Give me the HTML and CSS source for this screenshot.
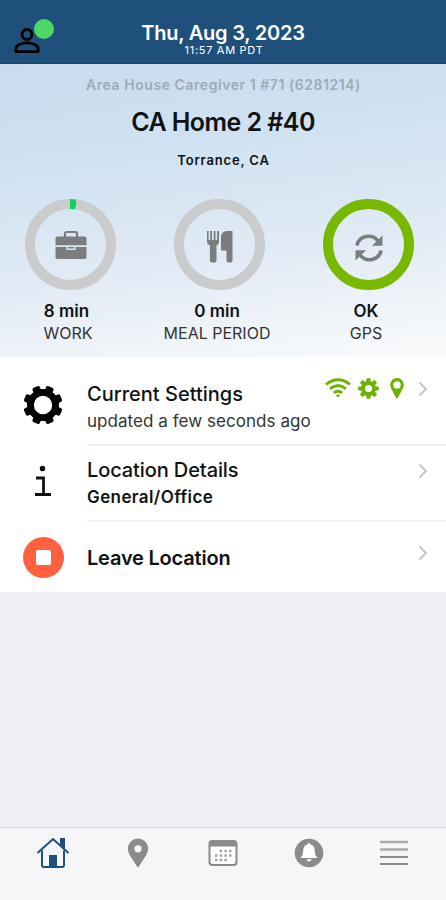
FILE: index.html
```html
<!DOCTYPE html>
<html lang="en">
  <head>
    <meta charset="UTF-8" />
    <meta name="viewport" content="width=device-width, initial-scale=1.0" />
    <title>CA Home 2 #40</title>
    <link rel="stylesheet" href="styles.css">
  </head>
  <body>
    <header class="topbar">
      <div class="profile">
        <svg width="28" height="26" viewBox="0 0 28 26" fill="none" stroke="#000" stroke-width="2.8">
          <circle cx="13" cy="6.5" r="5" />
          <path d="M1.8 23.6v-2.4c0-8.4 22.4-8.4 22.4 0v2.4z" stroke-linejoin="round" />
        </svg>
        <span class="online"></span>
      </div>
      <h1 class="date">Thu, Aug 3, 2023</h1>
      <div class="clock">11:57 AM PDT</div>
    </header>

    <section class="hero">
      <div class="caregiver">Area House Caregiver 1 #71 (6281214)</div>
      <h2 class="home">CA Home 2 #40</h2>
      <div class="city">Torrance, CA</div>

      <div class="stats">
        <div class="stat">
          <div class="ring work">
            <svg width="34" height="30" viewBox="0 0 34 30" fill="#7b7c7d">
              <path d="M11 7V3.5Q11 2 12.500 2h9Q23 2 23 3.500V7" fill="none" stroke="#7b7c7d" stroke-width="2.200" />
              <path d="M3.500 6.500h27q2 0 2 2v6.700h-31V8.500q0-2 2-2z" />
              <path d="M1.500 17h11v3h9v-3h11v10q0 2-2 2h-27q-2 0-2-2z" />
              <path d="M14 17h6v1.500h-6z" />
            </svg>
          </div>
          <div class="value">8 min</div>
          <div class="label">WORK</div>
        </div>
        <div class="stat">
          <div class="ring meal">
            <svg width="28" height="34" viewBox="0 0 28 34" fill="#7b7c7d">
              <path d="M1 1h1.600v9H4.200V1h1.800v9h1.700V1h1.800v9h1.600V1H13v11q0 2-2.500 3.500v15q0 2-3.300 2t-3.300-2v-15Q1 14 1 12z" />
              <path d="M26.500 1v29.500q0 2-3 2t-3-2V20.500H16q-1 0-1-1V7.500Q15 1 21 1z" />
            </svg>
          </div>
          <div class="value">0 min</div>
          <div class="label">MEAL PERIOD</div>
        </div>
        <div class="stat">
          <div class="ring ok">
            <svg width="30" height="30" viewBox="0 0 30 30" fill="#7b7c7d">
              <path d="M2.800 12.500A12 12 0 0 1 24 8M27.200 17.500A12 12 0 0 1 6 22" fill="none" stroke="#7b7c7d" stroke-width="3.600" />
              <path d="M28.500 2.500v10.200H18zM1.500 27.500V17.300H12z" />
            </svg>
          </div>
          <div class="value">OK</div>
          <div class="label">GPS</div>
        </div>
      </div>
    </section>

    <main class="list">
      <div class="row settings">
        <div class="row-icon">
          <svg width="40" height="40" viewBox="-20 -20 40 40">
            <defs>
              <g id="teeth">
                <rect x="-4" y="-19.600" width="8" height="39.200" rx="2" />
                <rect x="-4" y="-19.600" width="8" height="39.200" rx="2" transform="rotate(45)" />
                <rect x="-4" y="-19.600" width="8" height="39.200" rx="2" transform="rotate(90)" />
                <rect x="-4" y="-19.600" width="8" height="39.200" rx="2" transform="rotate(135)" />
              </g>
            </defs>
            <use href="#teeth" transform="rotate(22.5)" />
            <circle r="16" />
            <circle r="9.200" fill="#fff" />
          </svg>
        </div>
        <div class="row-body">
          <div class="text">
            <div class="title">Current Settings</div>
            <div class="sub">updated a few seconds ago</div>
          </div>
          <div class="status">
            <svg width="26" height="20" viewBox="0 0 26 20" fill="none" stroke="#6bb100" stroke-width="2.800">
              <path d="M1 6.500Q13-3 25 6.500M5 10.800Q13 4.300 21 10.800M8.800 14.900Q13 11.500 17.200 14.900" />
              <path d="M10.800 17.400Q13 15.700 15.200 17.400L13 19.600z" fill="#6bb100" stroke="none" />
            </svg>
            <svg width="21" height="21" viewBox="-20 -20 40 40" fill="#6bb100">
              <use href="#teeth" />
              <circle r="14.500" />
              <circle r="6.800" fill="#fff" />
            </svg>
            <svg class="pin" width="14" height="21" viewBox="0 0 14 21" fill="#6bb100">
              <path fill-rule="evenodd" d="M7 0a6.800 6.800 0 0 1 6.800 6.800C13.800 10 10 15.500 7.800 20q-.8 1-1.600 0C4 15.500.2 10 .2 6.800A6.800 6.800 0 0 1 7 0zm0 3.200a3.700 3.700 0 1 0 0 7.400 3.700 3.700 0 0 0 0-7.400z" />
            </svg>
          </div>
          <svg class="chevron" width="10" height="16" viewBox="0 0 10 16"><path d="M1.500 1.500 8 8l-6.500 6.500" /></svg>
        </div>
      </div>
      <div class="row details">
        <div class="row-icon">
          <svg width="18" height="32" viewBox="0 0 18 32">
            <circle cx="8.500" cy="3.500" r="2.700" />
            <path d="M2 13h7.500v16.500M1 29.500h16" fill="none" stroke="#111" stroke-width="2.800" />
          </svg>
        </div>
        <div class="row-body">
          <div class="text">
            <div class="title">Location Details</div>
            <div class="sub bold">General/Office</div>
          </div>
          <svg class="chevron" width="10" height="16" viewBox="0 0 10 16"><path d="M1.500 1.500 8 8l-6.500 6.500" /></svg>
        </div>
      </div>
      <div class="row leave">
        <div class="row-icon">
          <div class="stop"><span></span></div>
        </div>
        <div class="row-body">
          <div class="text">
            <div class="title">Leave Location</div>
          </div>
          <svg class="chevron" width="10" height="16" viewBox="0 0 10 16"><path d="M1.500 1.500 8 8l-6.500 6.500" /></svg>
        </div>
      </div>
    </main>

    <nav class="tabs">
      <svg width="34" height="32" viewBox="0 0 34 32" fill="none" stroke="#1f4f7d" stroke-width="2">
        <path d="M1.500 16 17 2l15.500 14" />
        <path d="M25 8V2h3v9.500" fill="#1f4f7d" />
        <path d="M6 13.500V28q0 2 2 2h18q2 0 2-2V13.500" />
        <path d="M13 18h8v11h-8z" fill="#1f4f7d" stroke="none" />
      </svg>
      <svg width="22" height="30" viewBox="0 0 22 30" fill="#8b8b8b">
        <path fill-rule="evenodd" d="M11 .5A10.200 10.200 0 0 1 21.200 10.700C21.200 16 15.500 22 12 28.500q-1 1.500-2 0C6.500 22 .8 16 .8 10.700A10.200 10.200 0 0 1 11 .5zm0 6.700a3.600 3.600 0 1 0 0 7.200 3.600 3.600 0 0 0 0-7.200z" />
      </svg>
      <svg width="30" height="28" viewBox="0 0 30 28" fill="none" stroke="#8b8b8b">
        <rect x="1.500" y="2" width="27" height="24" rx="3" fill="#fff" stroke-width="2" />
        <path d="M1.500 5h27" stroke-width="5" />
        <path d="M11.700 12h12M7 16.500h17M7 21h12" stroke="#a0a0a0" stroke-width="2.400" stroke-dasharray="2.400 2.300" />
      </svg>
      <svg width="30" height="30" viewBox="0 0 30 30">
        <circle cx="15" cy="15" r="14.300" fill="#8b8b8b" />
        <path d="M15 5q1.200 0 1.500 1.500c3.500 1 4.300 4 4.300 7q0 4 2.700 6.500h-17q2.700-2.500 2.700-6.500c0-3 .8-6 4.300-7Q13.800 5 15 5zM12.500 21.200h5Q17 23.500 15 23.500t-2.500-2.300z" fill="#fff" />
      </svg>
      <svg width="30" height="28" viewBox="0 0 30 28">
        <path d="M1 3h28M1 10.500h28" stroke="#ababab" stroke-width="2.600" />
        <path d="M1 18h28M1 25h28" stroke="#8b8b8b" stroke-width="2" />
      </svg>
    </nav>
  </body>
</html>
```

FILE: styles.css
```css
* {
  box-sizing: border-box;
}

body {
  margin: 0;
  height: 900px;
  display: flex;
  flex-direction: column;
  font-family: Inter, sans-serif;
  background: #eeeef3;
  color: #101214;
  overflow: hidden;
}

h1,
h2 {
  margin: 0;
}

svg {
  display: block;
  flex: none;
}

/* header */
.topbar {
  position: relative;
  height: 64px;
  padding-top: 21px;
  background: #1f507c;
  border-bottom: 1px solid #194468;
  color: #fff;
  text-align: center;
}

.profile {
  position: absolute;
  left: 14px;
  top: 28px;
}

.online {
  position: absolute;
  left: 20px;
  top: -9px;
  width: 20px;
  height: 20px;
  border-radius: 50%;
  background: #4bd964;
}

.date {
  font-size: 20px;
  line-height: 24px;
  font-weight: 600;
  letter-spacing: -0.22px;
}

.clock {
  padding-left: 2px;
  font-size: 11px;
  line-height: 11px;
  letter-spacing: 0.7px;
}

/* location summary */
.hero {
  height: 293px;
  padding-top: 12px;
  text-align: center;
  background: linear-gradient(172deg, #c7dcee 0%, #d2e3f2 35%, #e2ebf5 65%, #fafbfc 100%);
}

.caregiver {
  padding-left: 1px;
  font-size: 14px;
  line-height: 18px;
  font-weight: 600;
  letter-spacing: 0.55px;
  color: #9eabb8;
}

.home {
  margin-top: 12px;
  font-size: 25px;
  line-height: 32px;
  font-weight: 600;
  letter-spacing: -0.55px;
}

.city {
  margin-top: 13px;
  padding-left: 1px;
  font-size: 13px;
  line-height: 18px;
  font-weight: 600;
  letter-spacing: 0.85px;
}

.stats {
  display: flex;
  justify-content: space-between;
  margin-top: 30px;
  padding-right: 7px;
}

.stat {
  width: 141px;
}

.ring {
  position: relative;
  width: 91px;
  height: 91px;
  margin: 0 auto 11px;
  display: flex;
  align-items: center;
  justify-content: center;
  border-radius: 50%;
  border: 10px solid #cacbcb;
}

/* worked minutes so far */
.work::before {
  content: "";
  position: absolute;
  inset: -10px;
  border-radius: 50%;
  background: conic-gradient(#10ce60 7.5deg, transparent 7.5deg);
  mask: radial-gradient(circle, transparent 35px, #000 35.5px);
}

.meal {
  padding-top: 5px;
}

.ok {
  padding-top: 6px;
  border-color: #76b900;
}

.value,
.label {
  margin-left: -5px;
}

.value {
  font-size: 17px;
  line-height: 20px;
  font-weight: 600;
}

.work + .value {
  margin-left: -8px;
}

.label {
  margin-top: 2px;
  font-size: 16px;
  line-height: 20px;
  color: #333;
}

/* rows */
.list {
  height: 235px;
  background: #fff;
}

.row {
  display: flex;
}

.settings {
  height: 89px;
}

.details {
  height: 76px;
}

.leave {
  height: 70px;
}

.row-icon {
  width: 87px;
  padding-right: 1px;
  display: flex;
  justify-content: center;
}

.settings .row-icon {
  padding-top: 28px;
}

.details .row-icon {
  padding-top: 19px;
}

.leave .row-icon {
  padding-top: 15px;
}

.row-body {
  flex: 1;
  display: flex;
  align-items: flex-start;
  padding-right: 18px;
  border-bottom: 2px solid #f0f0f2;
}

.settings .row-body {
  padding-top: 25px;
}

.details .row-body {
  padding-top: 12px;
}

.leave .row-body {
  padding-top: 24px;
  border-bottom: 0;
}

.text {
  flex: 1;
}

.title {
  font-size: 20px;
  line-height: 24px;
  font-weight: 500;
}

.details .title {
  letter-spacing: -0.1px;
}

.leave .title {
  font-weight: 600;
  letter-spacing: -0.2px;
}

.sub {
  margin-top: 4px;
  font-size: 17px;
  line-height: 22px;
  letter-spacing: 0.05px;
  color: #333;
}

.bold {
  font-weight: 600;
  letter-spacing: 0.4px;
  color: #111;
}

.status {
  display: flex;
  gap: 7px;
  margin: -4px 14px 0 0;
}

.pin {
  margin-left: 4px;
}

.chevron {
  fill: none;
  stroke: #c5c5c8;
  stroke-width: 2;
}

.settings .chevron {
  margin-top: -1px;
}

.details .chevron {
  margin-top: 5px;
}

.leave .chevron {
  margin-top: -1px;
}

.stop {
  width: 41px;
  height: 41px;
  display: flex;
  align-items: center;
  justify-content: center;
  border-radius: 50%;
  background: #ff6040;
}

.stop span {
  width: 15px;
  height: 15px;
  border-radius: 2px;
  background: #fff;
}

/* bottom bar */
.tabs {
  margin-top: auto;
  height: 73px;
  padding: 9px 9px 0 10px;
  display: grid;
  grid-template-columns: repeat(5, 1fr);
  grid-template-rows: 32px;
  place-items: center;
  border-top: 1px solid #dcdce0;
  background: #f6f6f9;
}
```
